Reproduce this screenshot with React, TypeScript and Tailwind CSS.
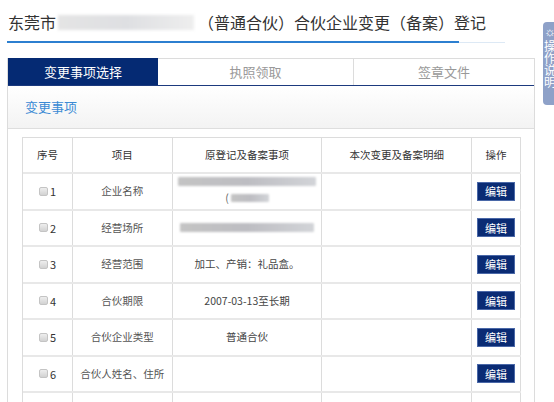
import React from 'react';

const rows = [
  { no: 1, item: '企业名称', orig: 'blur2' },
  { no: 2, item: '经营场所', orig: 'blur1' },
  { no: 3, item: '经营范围', orig: '加工、产销：礼品盒。' },
  { no: 4, item: '合伙期限', orig: '2007-03-13至长期' },
  { no: 5, item: '合伙企业类型', orig: '普通合伙' },
  { no: 6, item: '合伙人姓名、住所', orig: '' },
  { no: 7, item: '', orig: '' },
];

const Blurred = ({ w, h = 9 }: { w: number; h?: number }) => (
  <span
    className="inline-block rounded-[1px] bg-gradient-to-r from-[#c4c4c4] via-[#bdbdc2] to-[#d2d4d8] blur-[1px]"
    style={{ width: w, height: h }}
  />
);

const Checkbox = () => (
  <span className="inline-block h-[9px] w-[9px] rounded-[2px] border border-[#c4c4c4] bg-gradient-to-b from-[#eeeeee] to-[#d2d2d2]" />
);

const OrigCell = ({ value }: { value: string }) => {
  if (value === 'blur2') {
    return (
      <div className="flex flex-col items-center gap-[4px]">
        <Blurred w={138} />
        <span className="flex items-center gap-[2px] text-[#666]">
          (<Blurred w={38} h={8} />
        </span>
      </div>
    );
  }
  if (value === 'blur1') return <Blurred w={134} />;
  return <span>{value}</span>;
};

export default function App() {
  return (
    <div
      className="relative h-[402px] w-[554px] overflow-hidden bg-white text-[#333]"
      style={{ fontFamily: '"Microsoft YaHei", "Noto Sans CJK SC", "Noto Sans", sans-serif' }}
    >
      {/* title */}
      <div className="ml-[7px] w-[498px] pt-[11px]">
        <h1 className="flex h-[22px] items-center pl-[1px] text-[16px] font-normal leading-[22px] text-[#333]">
          <span>东莞市</span>
          <span className="mx-[2px] inline-block h-[15px] w-[136px] bg-gradient-to-r from-[#e4e4e4] via-[#dedfe2] to-[#eeeeee] blur-[1.5px]" />
          <span className="ml-[2px]">（普通合伙）合伙企业变更（备案）登记</span>
        </h1>
        <div className="mt-[8px] flex items-end">
          <div className="h-[2px] w-[452px] bg-[#2c7fd0]" />
          <div className="h-px flex-1 bg-[#dde9f5]" />
        </div>
      </div>

      {/* tabs + panel */}
      <div className="ml-[7px] mt-[15px] h-[400px] w-[528px] border-x border-[#dcdcdc]">
        <div className="flex h-[28px] border-b border-[#1c3a7e] text-[13px]">
          <div className="flex w-[150px] items-center justify-center bg-[#052a73] text-white">变更事项选择</div>
          <div className="flex w-[196px] items-center justify-center border-r border-t border-[#dcdcdc] text-[#999]">执照领取</div>
          <div className="flex flex-1 items-center justify-center border-t border-[#dcdcdc] text-[#999]">签章文件</div>
        </div>

        <div className="flex h-[43px] items-center border-b border-[#dedede] bg-gradient-to-b from-white to-[#f3f3f3] pl-[17px] text-[13px] text-[#3b8ad4]">
          变更事项
        </div>

        {/* table */}
        <div className="ml-[14px] mt-[8px] w-[499px] border-l border-t border-[#dcdcdc] text-[10.5px]">
          <div className="flex h-[36px] items-center border-b-2 border-[#e8e8e8] text-[#333]">
            <div className="flex h-full w-[50px] items-center justify-center border-r border-[#dcdcdc]">序号</div>
            <div className="flex h-full w-[100px] items-center justify-center border-r border-[#dcdcdc]">项目</div>
            <div className="flex h-full w-[150px] items-center justify-center border-r border-[#dcdcdc]">原登记及备案事项</div>
            <div className="flex h-full w-[150px] items-center justify-center border-r border-[#dcdcdc]">本次变更及备案明细</div>
            <div className="flex h-full w-[49px] items-center justify-center border-r border-[#dcdcdc]">操作</div>
          </div>
          {rows.map((r) => (
            <div key={r.no} className="flex h-[36.5px] items-center border-b-2 border-[#e8e8e8] text-[#555]">
              <div className="flex h-full w-[50px] items-center justify-center gap-[2px] border-r border-[#dcdcdc]">
                {r.no < 7 && (
                  <>
                    <Checkbox />
                    <span className="text-[11px] text-[#333]">{r.no}</span>
                  </>
                )}
              </div>
              <div className="flex h-full w-[100px] items-center justify-center border-r border-[#dcdcdc]">{r.item}</div>
              <div className="flex h-full w-[150px] items-center justify-center border-r border-[#dcdcdc] text-[#444]">
                <OrigCell value={r.orig} />
              </div>
              <div className="h-full w-[150px] border-r border-[#dcdcdc]" />
              <div className="flex h-full w-[49px] items-center justify-center border-r border-[#dcdcdc]">
                {r.no < 7 && (
                  <button className="flex h-[19px] w-[38px] items-center justify-center border border-[#4a68a8] bg-[#0a2b74] text-[11px] text-white">
                    编辑
                  </button>
                )}
              </div>
            </div>
          ))}
        </div>
      </div>

      {/* floating help tab, clipped at the window edge */}
      <div className="absolute left-[543px] top-[22px] h-[83px] w-[20px] rounded-l-[4px] bg-[#8ea1c8] pl-[1px] pt-[2px] text-white">
        <div className="h-[14px] w-[14px] text-[13px] leading-[14px]">☼</div>
        <div className="mt-[2px] w-[12px] text-[12px] leading-[12px]">操作说明</div>
      </div>
    </div>
  );
}
